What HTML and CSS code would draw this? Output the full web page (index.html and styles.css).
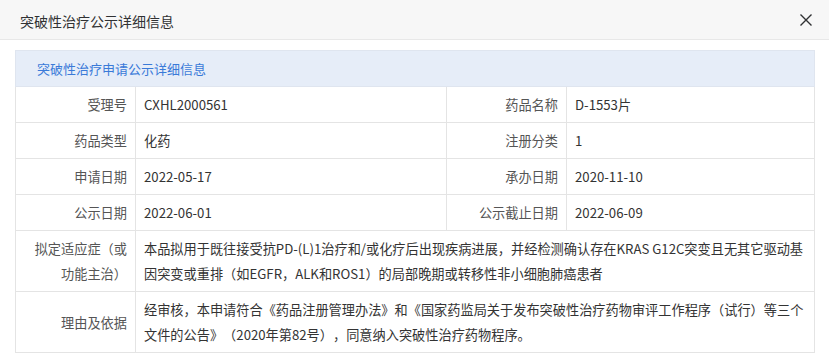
FILE: index.html
```html
<!DOCTYPE html>
<html lang="zh-CN">
<head>
<meta charset="utf-8">
<title>突破性治疗公示详细信息</title>
<link rel="stylesheet" href="styles.css">
</head>
<body>
<div class="dialog">
  <div class="dialog-header">
    <span class="dialog-title">突破性治疗公示详细信息</span>
    <button class="close" aria-label="关闭">
      <svg width="12" height="12" viewBox="0 0 12 12"><path d="M0.5 0.5L11.5 11.5M11.5 0.5L0.5 11.5" stroke="#303133" stroke-width="1.4" fill="none"/></svg>
    </button>
  </div>
  <div class="dialog-body">
    <table class="info">
      <colgroup>
        <col class="c-label"><col class="c-val1"><col class="c-label"><col>
      </colgroup>
      <tr><th colspan="4" class="caption">突破性治疗申请公示详细信息</th></tr>
      <tr><td class="label">受理号</td><td>CXHL2000561</td><td class="label">药品名称</td><td>D-1553片</td></tr>
      <tr><td class="label">药品类型</td><td>化药</td><td class="label">注册分类</td><td>1</td></tr>
      <tr><td class="label">申请日期</td><td>2022-05-17</td><td class="label">承办日期</td><td>2020-11-10</td></tr>
      <tr><td class="label">公示日期</td><td>2022-06-01</td><td class="label">公示截止日期</td><td>2022-06-09</td></tr>
      <tr><td class="label">拟定适应症（或功能主治）</td><td colspan="3">本品拟用于既往接受抗PD-(L)1治疗和/或化疗后出现疾病进展，并经检测确认存在KRAS G12C突变且无其它驱动基因突变或重排（如EGFR，ALK和ROS1）的局部晚期或转移性非小细胞肺癌患者</td></tr>
      <tr><td class="label">理由及依据</td><td colspan="3">经审核，本申请符合《药品注册管理办法》和《国家药监局关于发布突破性治疗药物审评工作程序（试行）等三个文件的公告》（2020年第82号），同意纳入突破性治疗药物程序。</td></tr>
    </table>
  </div>
</div>
</body>
</html>
```

FILE: styles.css
```css
html, body {
  margin: 0;
  padding: 0;
  background: #fff;
}
body {
  font-family: "Noto Sans CJK SC", "Noto Sans", sans-serif;
  font-size: 13.2px;
  color: #333;
  text-spacing-trim: space-all;
}
.dialog-header {
  height: 40px;
  background: #f7f7f7;
  border-bottom: 1px solid #e8e8e8;
  display: flex;
  align-items: center;
  justify-content: space-between;
  padding: 0 17px 0 20px;
  box-sizing: border-box;
}
.dialog-title {
  font-size: 14px;
  color: #303133;
  line-height: 22px;
  padding-top: 2px;
}
.close {
  border: 0;
  background: none;
  padding: 0;
  width: 12px;
  height: 14px;
  display: flex;
  align-items: center;
  justify-content: center;
  cursor: pointer;
}
.dialog-body {
  padding: 10px 14px 0 15px;
}
.info {
  width: 800px;
  border-collapse: collapse;
  table-layout: fixed;
}
.c-label { width: 120px; }
.c-val1 { width: 311px; }
.info th, .info td {
  border: 1px solid #e4e4e4;
  padding: 5px 10px 5px 8px;
  line-height: 25px;
  font-weight: normal;
  vertical-align: middle;
  text-align: left;
}
.info .caption {
  background: #e6edf8;
  color: #3a7ad8;
  font-size: 13px;
  padding: 5px 21px;
  height: 36px;
  box-sizing: border-box;
  border-color: #dfe5ef;
}
.info td {
  color: #333;
}
.info td.label {
  text-align: right;
  color: #555;
  padding-right: 8px;
  padding-left: 14px;
}
```
